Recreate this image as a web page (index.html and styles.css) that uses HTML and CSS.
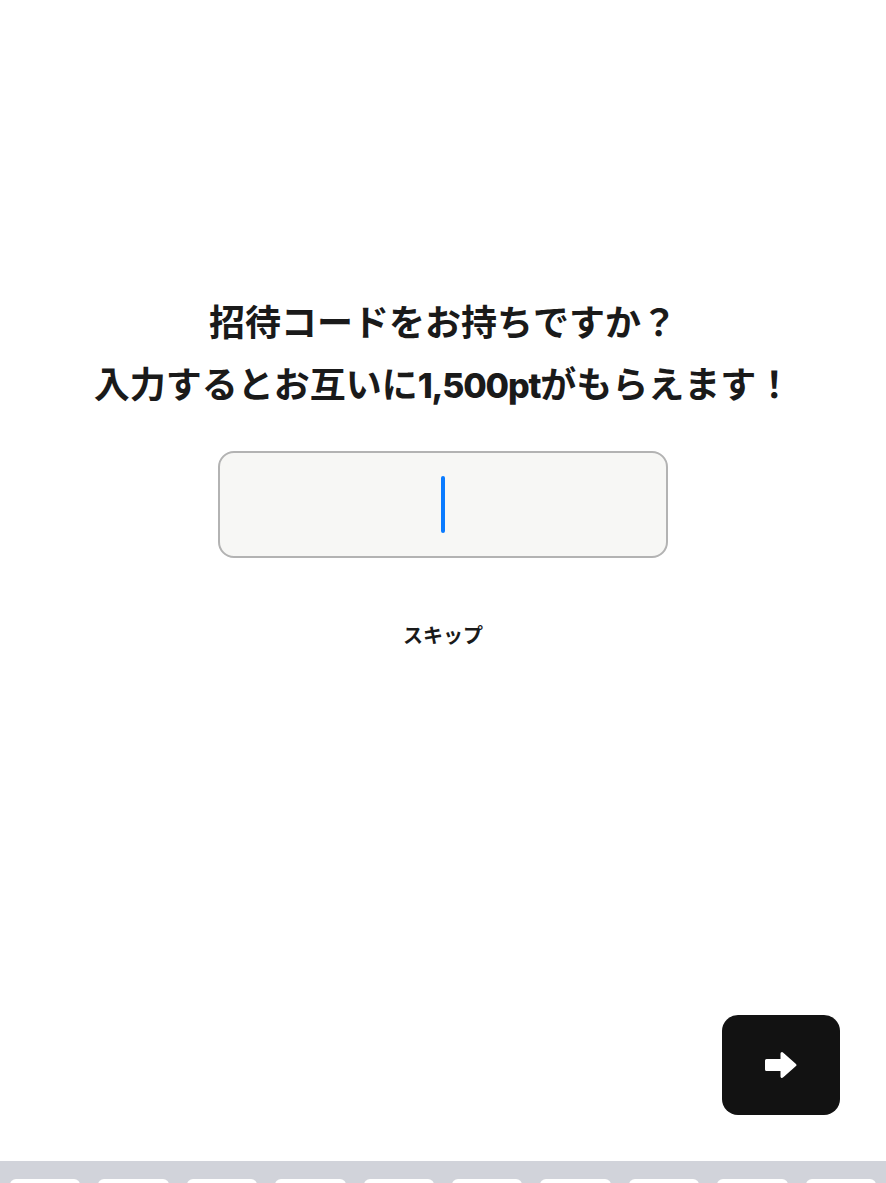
FILE: index.html
```html
<!DOCTYPE html>
<html lang="ja">
<head>
<meta charset="utf-8">
<title>招待コード</title>
<link rel="stylesheet" href="styles.css">
</head>
<body>
<div class="screen">
  <main class="content">
    <h1 class="title">
      <span class="line">招待コードをお持ちですか？</span>
      <span class="line">入力するとお互いに<span class="num">1,500pt</span>がもらえます！</span>
    </h1>
    <div class="code-input"><span class="caret"></span></div>
    <button class="skip" type="button">スキップ</button>
  </main>
  <div class="actions">
    <button class="next" type="button" aria-label="次へ">
      <svg width="34" height="28" viewBox="0 0 34 28">
        <path d="M2.5 9.5 H18 V2.5 L31 14 L18 25.5 V18.5 H2.5 Z" fill="#fff" stroke="#fff" stroke-width="3" stroke-linejoin="round"/>
      </svg>
    </button>
  </div>
  <div class="keyboard">
    <div class="key"></div><div class="key"></div><div class="key"></div><div class="key"></div><div class="key"></div>
    <div class="key"></div><div class="key"></div><div class="key"></div><div class="key"></div><div class="key"></div>
  </div>
</div>
</body>
</html>
```
FILE: styles.css
```css
* { box-sizing: border-box; }
html, body { margin: 0; padding: 0; background: #fff; }
body {
  font-family: "Noto Sans CJK JP", "Noto Sans", sans-serif;
  color: #1a1a1a;
}
.screen {
  height: 1183px;
  display: flex;
  flex-direction: column;
  overflow: hidden;
}
.content {
  flex: 1;
  display: flex;
  flex-direction: column;
  align-items: center;
  padding-top: 289px;
}
.title {
  margin: 0;
  font-size: 36px;
  font-weight: 700;
  line-height: 62px;
  text-align: center;
  display: flex;
  flex-direction: column;
  align-items: center;
}
.line { display: block; white-space: nowrap; }
.num {
  font-family: "Inter", "Noto Sans", sans-serif;
  font-size: 34px;
  font-weight: 800;
  letter-spacing: -1.2px;
}
.code-input {
  margin-top: 34px;
  width: 450px;
  height: 107px;
  border: 2px solid #b3b3b3;
  border-radius: 16px;
  background: #f7f7f5;
  display: flex;
  align-items: center;
  justify-content: center;
}
.caret {
  width: 4px;
  height: 57px;
  border-radius: 2px;
  background: #0a7bff;
}
.skip {
  margin-top: 63px;
  padding: 0;
  border: 0;
  background: none;
  font-family: "Noto Sans CJK JP", sans-serif;
  font-size: 20px;
  font-weight: 700;
  line-height: 28px;
  color: #1a1a1a;
}
.actions {
  display: flex;
  justify-content: flex-end;
  padding: 0 46px 46px 0;
}
.next {
  width: 118px;
  height: 100px;
  border: 0;
  border-radius: 16px;
  background: #121212;
  display: flex;
  align-items: center;
  justify-content: center;
  padding: 0;
}
.keyboard {
  height: 22px;
  background: #d1d3da;
  display: grid;
  grid-template-columns: repeat(10, 1fr);
  column-gap: 18px;
  padding: 18px 10px 0;
  overflow: hidden;
}
.key {
  height: 44px;
  background: #fff;
  border-radius: 6px;
}
```
